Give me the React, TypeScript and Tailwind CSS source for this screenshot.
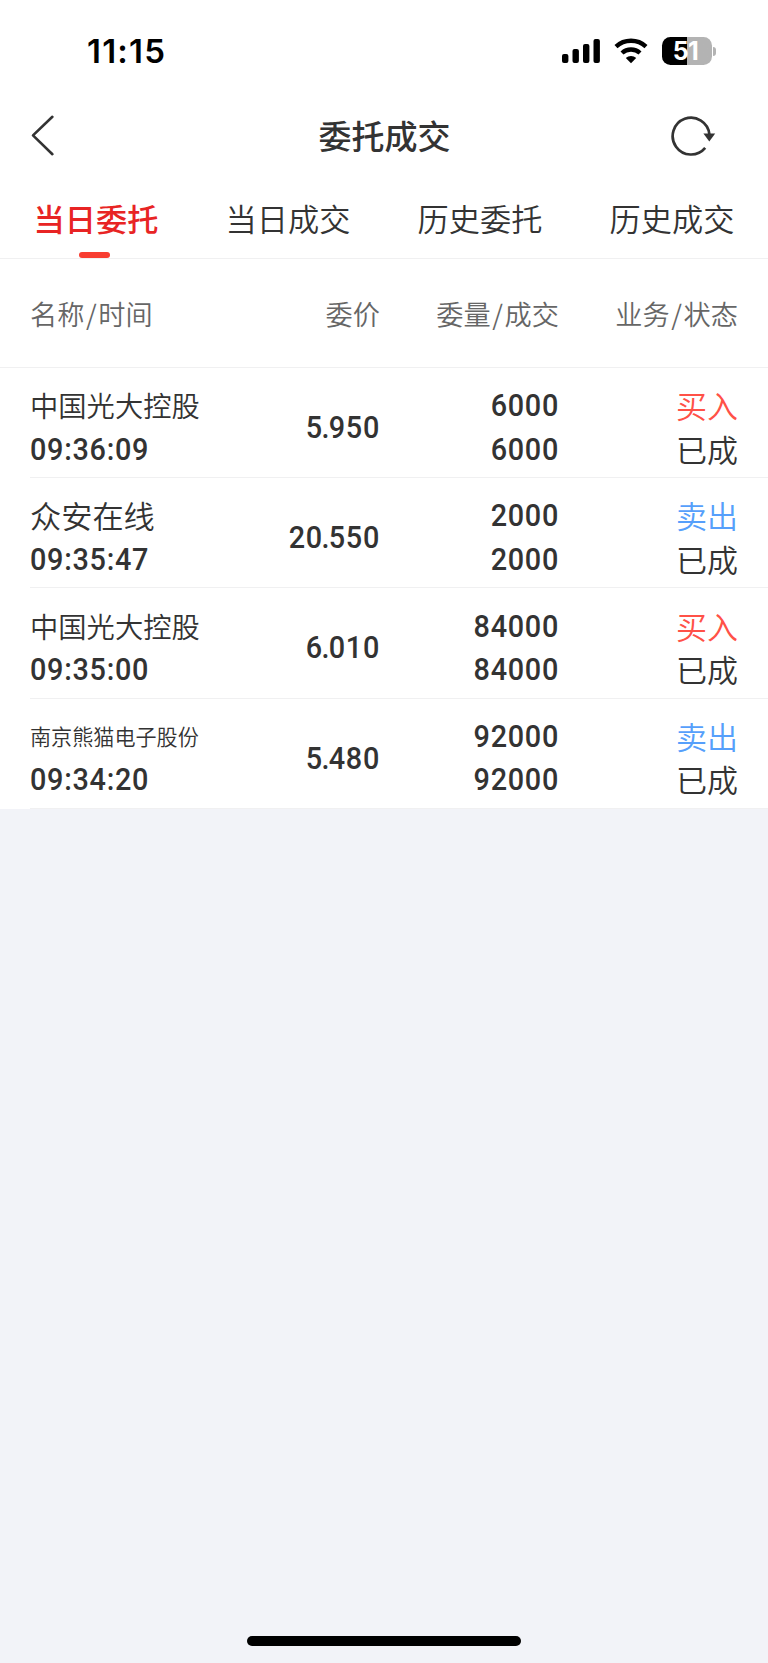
interface Order {
  name: string;
  nameClass: string;
  time: string;
  price: string;
  amount: string;
  filled: string;
  side: "buy" | "sell";
}

const tabs = ["当日委托", "当日成交", "历史委托", "历史成交"];

const orders: Order[] = [
  { name: "中国光大控股", nameClass: "text-[28.3px] leading-[41px]", time: "09:36:09", price: "5.950", amount: "6000", filled: "6000", side: "buy" },
  { name: "众安在线", nameClass: "text-[31.2px] leading-[41px]", time: "09:35:47", price: "20.550", amount: "2000", filled: "2000", side: "sell" },
  { name: "中国光大控股", nameClass: "text-[28.3px] leading-[41px]", time: "09:35:00", price: "6.010", amount: "84000", filled: "84000", side: "buy" },
  { name: "南京熊猫电子股份", nameClass: "text-[21.1px] leading-[42.5px]", time: "09:34:20", price: "5.480", amount: "92000", filled: "92000", side: "sell" },
];

// Roboto squeezed a little to get DIN-like figures
const digits = "font-['Roboto',sans-serif] font-medium text-[32px] tracking-[0.8px] scale-x-90";

function StatusBar() {
  return (
    <div className="flex h-[88px] items-start justify-between pl-[87px] pr-[52px] pt-[32px]">
      <span className="font-['Inter',sans-serif] text-[33px] font-semibold leading-[38px] tracking-[1.2px] text-black">11:15</span>
      <div className="flex items-center pt-[4px]">
        <svg width="39" height="30" viewBox="0 0 39 30" fill="#000">
          <rect x="0" y="18" width="6.4" height="9" rx="2" />
          <rect x="10.5" y="13" width="6.4" height="14" rx="2" />
          <rect x="21" y="8" width="6.4" height="19" rx="2" />
          <rect x="31.5" y="3" width="6.4" height="24" rx="2" />
        </svg>
        <svg className="ml-[13px]" width="34" height="30" viewBox="0 0 34 30" fill="none" stroke="#000" strokeWidth="4.4">
          <path d="M2 10.6C10.4 2.8 23.6 2.8 32 10.6" />
          <path d="M8 17C13 12.4 21 12.4 26 17" />
          <path d="M17 27.2L11.8 21.9C14.7 19.2 19.3 19.2 22.2 21.9Z" fill="#000" stroke="none" />
        </svg>
        <div className="ml-[14px] flex h-[27.5px] w-[50px] items-center justify-center rounded-[8.5px] bg-linear-to-r from-black from-50% to-[#b3b3b3] to-50% pr-[2px] font-['Inter',sans-serif] text-[25px] font-bold leading-none tracking-[-0.6px] text-white">
          51
        </div>
        <div className="ml-[1.5px] h-[9px] w-[3px] rounded-r-full bg-[#b3b3b3]" />
      </div>
    </div>
  );
}

function NavBar() {
  return (
    <div className="flex h-[96px] items-center justify-between pl-[30px] pr-[49px]">
      <svg width="26" height="44" viewBox="0 0 26 44" fill="none" stroke="#333" strokeWidth="2.6" strokeLinecap="round" strokeLinejoin="round">
        <path d="M22.4 2.8L3 21.4L22.4 40.2" />
      </svg>
      <h1 className="pb-[2px] pl-[42px] text-[33px] font-medium leading-none text-[#333]">委托成交</h1>
      <svg width="48" height="44" viewBox="0 0 48 44" fill="none">
        <path d="M34.2 33.9A18.4 18.4 0 1 1 38.4 20.4" stroke="#333" strokeWidth="2.7" />
        <path d="M32.4 19.6H44.2L38.3 27.6Z" fill="#333" />
      </svg>
    </div>
  );
}

function ColumnTitle({ first, second, className }: { first: string; second?: string; className: string }) {
  return (
    <div className={className}>
      {first}
      {second && <span className="mx-[1.6px]">/</span>}
      {second}
    </div>
  );
}

function OrderRow({ order }: { order: Order }) {
  const [whole, decimals] = order.price.split(".");

  return (
    <div className="ml-[30px] flex h-[110.2px] items-center border-b-[1.5px] border-[#f0f0f1] pr-[30px] pt-[10px] font-[350] text-[#333]">
      <div className="w-[190px] whitespace-nowrap">
        <div className={`h-[43.3px] ${order.nameClass}`}>{order.name}</div>
        <div className={`h-[43.3px] origin-left leading-[43.3px] ${digits}`}>{order.time}</div>
      </div>
      <div className={`w-[160px] origin-right text-right leading-[43.3px] ${digits}`}>
        {whole}
        <span className="mx-[-1.6px]">.</span>
        {decimals}
      </div>
      <div className={`w-[179px] origin-right text-right ${digits}`}>
        <div className="h-[43.3px] leading-[43.3px]">{order.amount}</div>
        <div className="h-[43.3px] leading-[43.3px]">{order.filled}</div>
      </div>
      <div className="flex-1 text-right text-[31px] leading-[41px]">
        <div className={`h-[43.3px] ${order.side === "buy" ? "text-[#ff5147]" : "text-[#569ffb]"}`}>
          {order.side === "buy" ? "买入" : "卖出"}
        </div>
        <div className="h-[43.3px]">已成</div>
      </div>
    </div>
  );
}

export default function App() {
  return (
    <div className="flex h-[1663px] w-[768px] flex-col bg-[#f2f3f8] font-['Noto_Sans_CJK_SC',sans-serif]">
      <div className="bg-white">
        <StatusBar />
        <NavBar />

        <div className="flex h-[75px] border-b-[1.5px] border-[#f0f0f1]">
          {tabs.map((tab, i) => (
            <div key={tab} className="flex flex-1 flex-col items-center justify-between pt-[12px]">
              <span className={`text-[31.2px] leading-[44px] ${i === 0 ? "font-medium text-[#e82424]" : "font-[350] text-[#333]"}`}>{tab}</span>
              {i === 0 && <span className="mr-[3px] h-[6px] w-[31px] rounded-full bg-[#f83d31]" />}
            </div>
          ))}
        </div>

        {/* column titles */}
        <div className="flex h-[109px] items-center border-b-[1.5px] border-[#f0f0f1] px-[30px] text-[27.2px] font-[350] text-[#666]">
          <ColumnTitle className="w-[190px]" first="名称" second="时间" />
          <ColumnTitle className="w-[160px] text-right" first="委价" />
          <ColumnTitle className="w-[179px] text-right" first="委量" second="成交" />
          <ColumnTitle className="flex-1 text-right" first="业务" second="状态" />
        </div>

        {orders.map((order) => (
          <OrderRow key={order.time} order={order} />
        ))}
      </div>

      {/* home indicator */}
      <div className="mb-[17px] mt-auto h-[10px] w-[274px] self-center rounded-full bg-black" />
    </div>
  );
}
